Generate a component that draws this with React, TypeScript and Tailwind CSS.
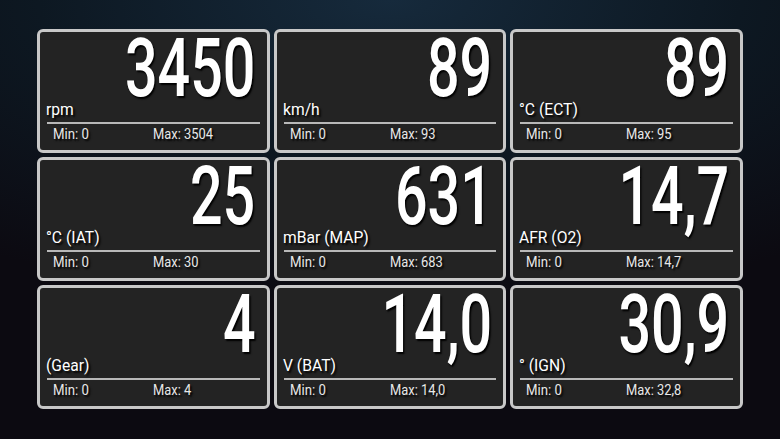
const GAUGES = [
  { value: "3450", unit: "rpm", min: "0", max: "3504" },
  { value: "89", unit: "km/h", min: "0", max: "93" },
  { value: "89", unit: "°C (ECT)", min: "0", max: "95" },
  { value: "25", unit: "°C (IAT)", min: "0", max: "30" },
  { value: "631", unit: "mBar (MAP)", min: "0", max: "683" },
  { value: "14,7", unit: "AFR (O2)", min: "0", max: "14,7" },
  { value: "4", unit: "(Gear)", min: "0", max: "4" },
  { value: "14,0", unit: "V (BAT)", min: "0", max: "14,0" },
  { value: "30,9", unit: "° (IGN)", min: "0", max: "32,8" },
];

type Gauge = (typeof GAUGES)[number];

function GaugeCard({ gauge }: { gauge: Gauge }) {
  return (
    <div className="flex h-[124px] flex-col rounded-[6px] border-[3px] border-[#c8c8c8] bg-[#232323] px-[7px] text-white [text-shadow:2px_2px_2px_#000]">
      <div className="mt-[6px] flex h-[60px] items-start justify-end pr-[4px]">
        <span className="-mt-[11px] block origin-right scale-x-[0.7] text-[82px] leading-none font-medium whitespace-nowrap">
          {gauge.value}
        </span>
      </div>
      <div className="-ml-px h-[20px]">
        <span className="inline-block origin-left scale-x-[0.92] text-[17px] leading-[20px] whitespace-nowrap">
          {gauge.unit}
        </span>
      </div>
      <div className="mt-[4px] h-[2px] bg-[#b8b8b8]" />
      <div className="mt-[1px] flex pl-[6px] text-[15px] leading-[18px] text-[#e8e8e8]">
        <div className="w-[100px]">
          <span className="inline-block origin-left scale-x-[0.88] whitespace-nowrap">
            Min: {gauge.min}
          </span>
        </div>
        <span className="inline-block origin-left scale-x-[0.86] whitespace-nowrap">
          Max: {gauge.max}
        </span>
      </div>
    </div>
  );
}

export default function App() {
  return (
    <div
      className="h-[439px] w-[780px] overflow-hidden bg-[radial-gradient(ellipse_90%_70%_at_50%_0%,#162a3c_0%,#0d1822_50%,#0c0a11_100%)] px-[37px] pt-[29px]"
      style={{ fontFamily: "Roboto, 'Liberation Sans', sans-serif" }}
    >
      <div className="grid grid-cols-3 gap-[4px]">
        {GAUGES.map((g, i) => (
          <GaugeCard key={i} gauge={g} />
        ))}
      </div>
    </div>
  );
}
